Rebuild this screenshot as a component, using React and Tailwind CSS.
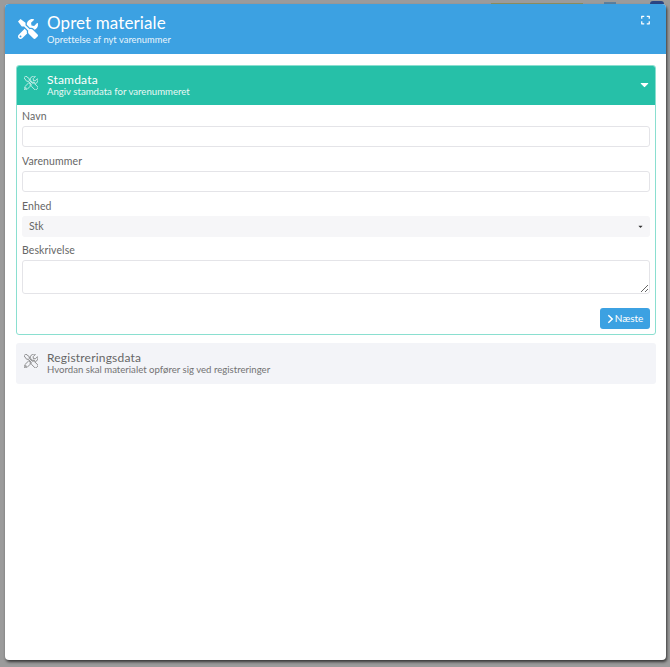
import React from 'react';
import { FaTools, FaExpand, FaCaretDown } from 'react-icons/fa';

function SectionHead({ title, sub, active }) {
  return (
    <div className={`h-[40px] flex items-center pl-[7px] pr-[8px] ${active ? 'text-white' : 'text-[#666]'}`}>
      {/* the outlined tools glyph: the solid icon drawn as a stroke */}
      <FaTools className="w-[14px] h-[14px] mb-[4px] ml-[1px] mr-[1px]" fill="none" stroke="currentColor" strokeWidth="26" />
      <div className="ml-[8px] flex-1 flex flex-col">
        <span className="text-[12px] leading-[13px] mt-[1px] tracking-[0.2px]">{title}</span>
        <span className="text-[9.6px] leading-[12px] opacity-90">{sub}</span>
      </div>
      {active && <FaCaretDown className="w-[9px] h-[13px] mr-[-1px] mb-[1px]" />}
    </div>
  );
}

function Field({ label, children }) {
  return (
    <div className="flex flex-col">
      <label className="text-[10.5px] leading-[13px] tracking-[0.1px] text-[#666] mb-[3px]">{label}</label>
      {children}
    </div>
  );
}

export default function App() {
  return (
    <div className="relative w-[670px] h-[667px] bg-[#9b9b9b] overflow-hidden pt-[4px] pl-[5px] pr-[4px] pb-[7px] font-['Lato','Noto_Sans',sans-serif]">
      {/* page behind the backdrop */}
      <div className="absolute left-[491px] top-[3px] w-[92px] h-[1px] bg-[#8f8f5f]" />
      <div className="absolute left-[604px] top-[2px] w-[12px] h-[2px] bg-[#5d7f9c]" />
      <div className="absolute left-[650px] top-[1px] w-[14px] h-[3px] rounded-t-full bg-[#2a4482]" />

      <div className="relative h-full bg-white rounded-[4px] shadow-[1px_2px_3px_rgba(0,0,0,0.65)] flex flex-col">
        <div className="h-[50px] bg-[#3ca1e2] rounded-t-[4px] flex items-center pl-[13px] pr-[15px] text-white">
          <FaTools className="w-[20px] h-[20px]" />
          <div className="ml-[9px] flex-1 flex flex-col">
            <span className="text-[17px] leading-[21px] tracking-[0.1px]">Opret materiale</span>
            <span className="text-[9.3px] leading-[12px] mt-[1px] tracking-[0.05px] opacity-90">Oprettelse af nyt varenummer</span>
          </div>
          <FaExpand className="w-[11px] h-[10px] mb-[18px]" />
        </div>

        <div className="pl-[11px] pr-[10px] pt-[11px] flex flex-col gap-[8px]">
          <div className="rounded-[3px] border border-[#8adfd0] overflow-hidden">
            <div className="bg-[#26c0a8] -mx-px -mt-px">
              <SectionHead active title="Stamdata" sub="Angiv stamdata for varenummeret" />
            </div>
            <div className="px-[5px] pt-[5px] pb-[5px] flex flex-col">
              <Field label="Navn">
                <input className="h-[21px] border border-[#e4e4e8] rounded-[3px] outline-none" />
              </Field>
              <div className="mt-[8px]">
                <Field label="Varenummer">
                  <input className="w-full h-[21px] border border-[#e4e4e8] rounded-[3px] outline-none" />
                </Field>
              </div>
              <div className="mt-[8px]">
                <Field label="Enhed">
                  <div className="h-[21px] bg-[#f6f6f8] rounded-[3px] flex items-center justify-between pl-[7px] pr-[7px] text-[10.5px] text-[#666]">
                    <span>Stk</span>
                    <FaCaretDown className="w-[5px] h-[7px] text-[#333]" />
                  </div>
                </Field>
              </div>
              <div className="mt-[7px]">
                <Field label="Beskrivelse">
                  <textarea className="block w-full h-[34px] border border-[#e4e4e8] rounded-[3px] outline-none" />
                </Field>
              </div>
              <div className="flex justify-end mt-[14px]">
                <button className="w-[50px] h-[21px] bg-[#3ca1e2] rounded-[3px] text-white text-[10px] flex items-center justify-center gap-[1px]">
                  <svg viewBox="0 0 8 10" className="w-[7px] h-[10px]" fill="none" stroke="currentColor" strokeWidth="1.7">
                    <path d="M1.5 0.8 L6 5 L1.5 9.2" />
                  </svg>
                  Næste
                </button>
              </div>
            </div>
          </div>

          <div className="rounded-[3px] bg-[#f3f4f8] pb-[1px]">
            <SectionHead title="Registreringsdata" sub="Hvordan skal materialet opfører sig ved registreringer" />
          </div>
        </div>
      </div>
    </div>
  );
}
